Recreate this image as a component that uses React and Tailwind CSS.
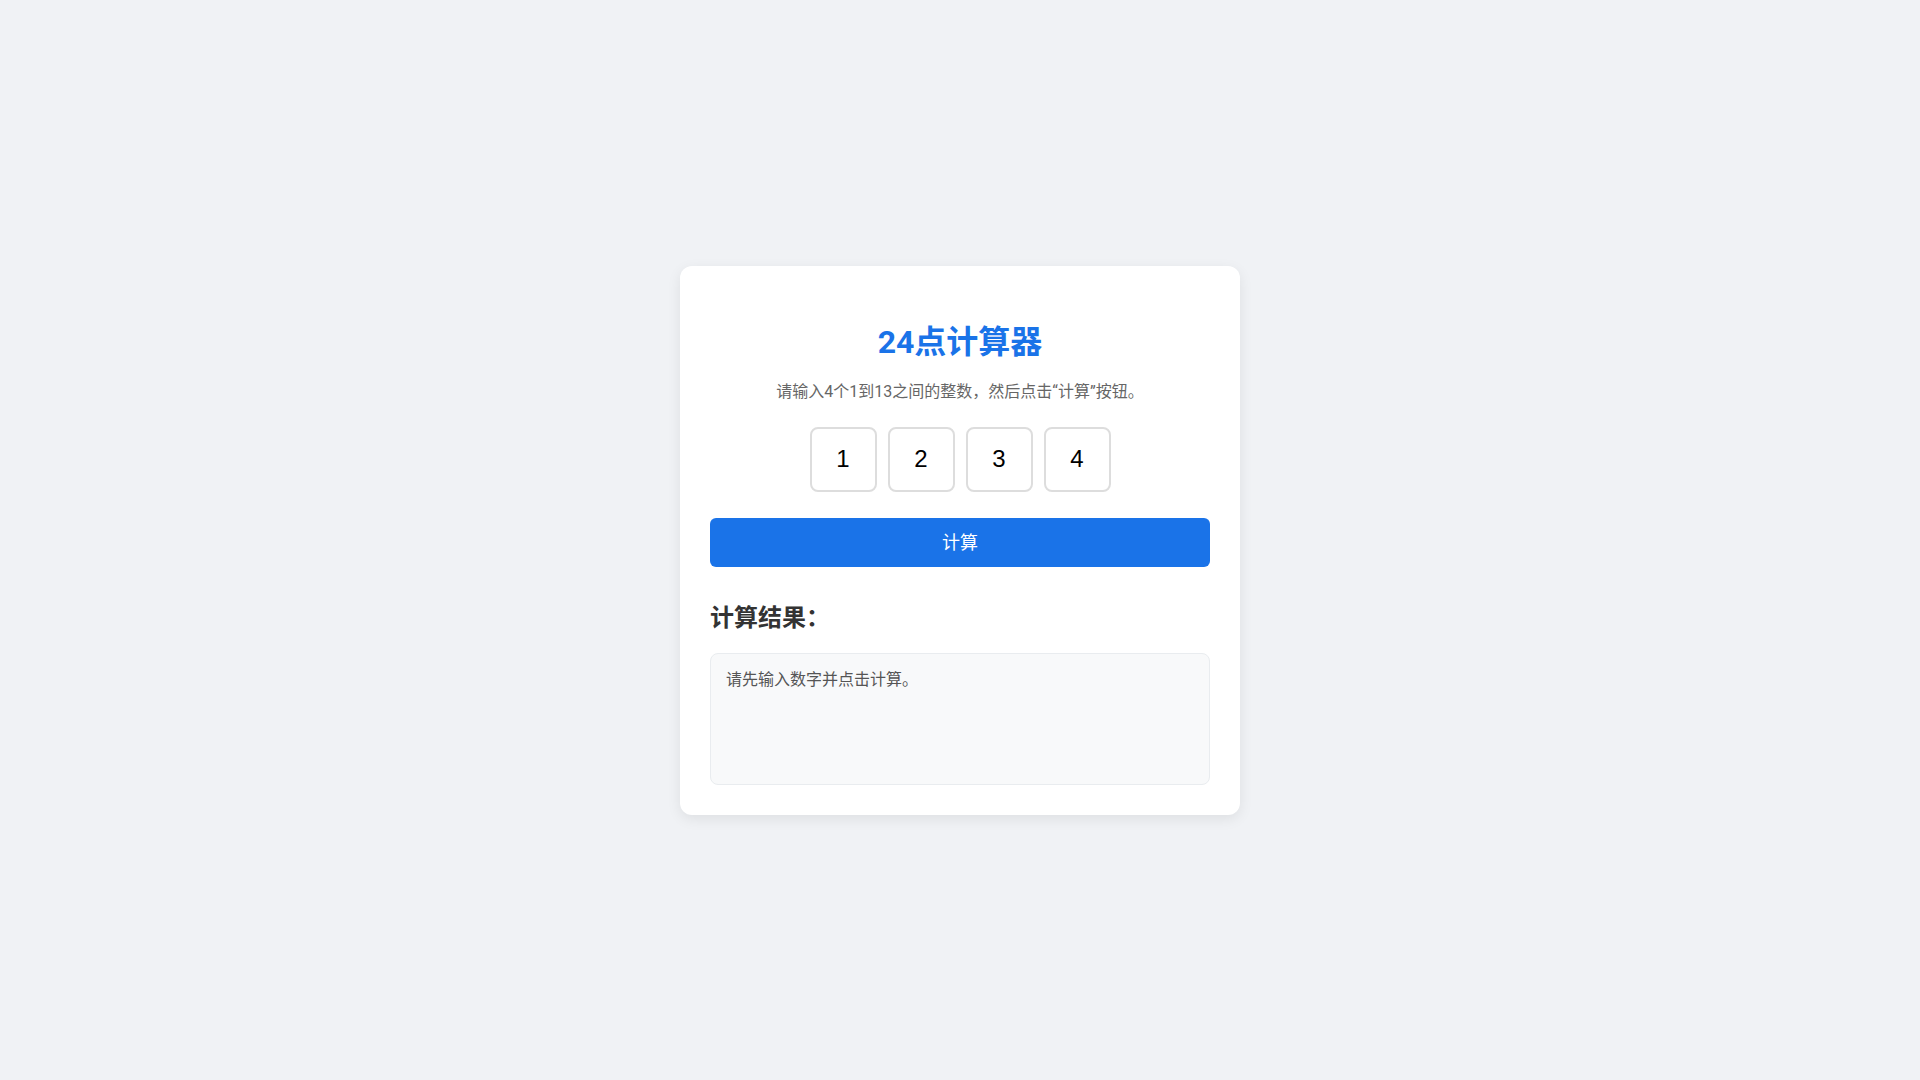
import React, { useState } from "react";

// 24-point calculator: try every ordering and operator combination
function solve24(nums) {
    const results = new Set();
    const search = (items) => {
        if (items.length === 1) {
            if (Math.abs(items[0].v - 24) < 1e-6) results.add(items[0].e);
            return;
        }
        for (let i = 0; i < items.length; i++) {
            for (let j = 0; j < items.length; j++) {
                if (i === j) continue;
                const a = items[i];
                const b = items[j];
                const rest = items.filter((_, k) => k !== i && k !== j);
                const options = [
                    { v: a.v + b.v, e: `(${a.e}+${b.e})` },
                    { v: a.v - b.v, e: `(${a.e}-${b.e})` },
                    { v: a.v * b.v, e: `(${a.e}×${b.e})` },
                ];
                if (b.v !== 0) options.push({ v: a.v / b.v, e: `(${a.e}÷${b.e})` });
                options.forEach((o) => search([...rest, o]));
            }
        }
    };
    search(nums.map((n) => ({ v: n, e: String(n) })));
    return [...results].map((e) => e.slice(1, -1));
}

export default function App() {
    const [values, setValues] = useState(["1", "2", "3", "4"]);
    const [result, setResult] = useState("请先输入数字并点击计算。");

    const handleChange = (index, val) => {
        setValues((prev) => prev.map((v, i) => (i === index ? val : v)));
    };

    const handleCalculate = () => {
        const nums = values.map((v) => parseInt(v, 10));
        if (nums.some((n) => isNaN(n) || n < 1 || n > 13)) {
            setResult("请输入4个1到13之间的整数。");
            return;
        }
        const found = solve24(nums);
        if (found.length === 0) {
            setResult("无解。");
        } else {
            setResult(found.slice(0, 10).join("\n"));
        }
    };

    return (
        <div
            className="min-h-screen bg-[#f0f2f5] flex items-center justify-center"
            style={{ fontFamily: 'Roboto, "Noto Sans CJK SC", sans-serif' }}
        >
            <div className="w-[560px] bg-white rounded-xl p-[30px] shadow-[0_4px_14px_rgba(0,0,0,0.08)] flex flex-col">
                <h1 className="mt-[26px] text-[32px] leading-[40px] font-bold text-[#1a73e8] text-center">
                    24点计算器
                </h1>
                <p className="mt-[18px] text-[16px] leading-[24px] text-[#666] text-center">
                    请输入4个1到13之间的整数，然后点击“计算”按钮。
                </p>

                <div className="mt-[23px] flex justify-center gap-[11px]">
                    {values.map((val, idx) => (
                        <input
                            key={idx}
                            type="number"
                            min="1"
                            max="13"
                            value={val}
                            onChange={(e) => handleChange(idx, e.target.value)}
                            className="w-[67px] h-[65px] border-2 border-[#ddd] rounded-lg text-center text-[24px] text-black outline-none focus:border-[#1a73e8] [appearance:textfield] [&::-webkit-inner-spin-button]:appearance-none [&::-webkit-outer-spin-button]:appearance-none"
                            style={{ fontFamily: '"Liberation Sans", Arial, sans-serif' }}
                        />
                    ))}
                </div>

                <button
                    onClick={handleCalculate}
                    className="mt-[26px] h-[49px] w-full bg-[#1a73e8] text-white text-[18px] rounded-md hover:bg-[#1765cc] cursor-pointer"
                >
                    计算
                </button>

                <h2 className="mt-[35px] text-[24px] leading-[32px] font-bold text-[#333]">
                    计算结果：
                </h2>

                <div className="mt-[19px] h-[132px] bg-[#f8f9fa] border border-[#e9ecef] rounded-lg p-[15px] text-[16px] leading-[22px] text-[#555] whitespace-pre-line">
                    {result}
                </div>
            </div>
        </div>
    );
}
